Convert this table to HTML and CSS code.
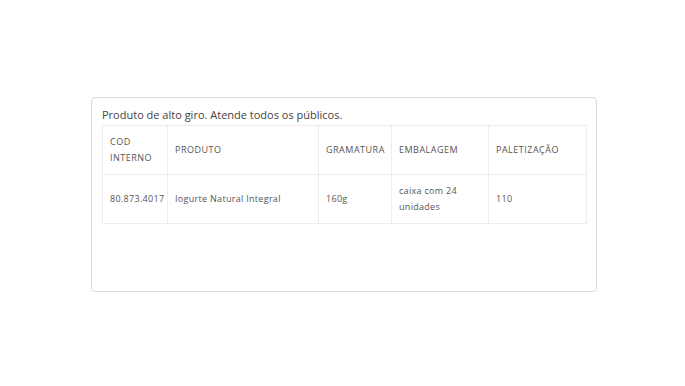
FILE: index.html
```html
<!DOCTYPE html>
<html lang="pt">
<head>
<meta charset="utf-8">
<link rel="stylesheet" href="styles.css">
</head>
<body>
<div class="page">
  <div class="card">
    <p class="desc">Produto de alto giro. Atende todos os públicos.</p>
    <table class="spec">
      <colgroup>
        <col class="c1"><col class="c2"><col class="c3"><col class="c4"><col class="c5">
      </colgroup>
      <thead>
        <tr><th>COD<br>INTERNO</th><th>PRODUTO</th><th>GRAMATURA</th><th>EMBALAGEM</th><th>PALETIZAÇÃO</th></tr>
      </thead>
      <tbody>
        <tr><td>80.873.4017</td><td>Iogurte Natural Integral</td><td>160g</td><td>caixa com 24<br>unidades</td><td>110</td></tr>
      </tbody>
    </table>
  </div>
</div>
</body>
</html>
```
FILE: styles.css
```css
html, body {
  margin: 0;
  padding: 0;
  background: #fff;
}
.page {
  padding: 97px 0 0 91px;
}
.card {
  box-sizing: border-box;
  width: 506px;
  height: 195px;
  border: 1px solid #d9d9d9;
  border-radius: 4px;
  padding: 9px 10px 0 10px;
  font-family: "Open Sans", sans-serif;
}
.desc {
  margin: 0 0 3px 0;
  font-size: 11px;
  line-height: 15px;
  color: #444;
}
.spec {
  width: 484px;
  border-collapse: collapse;
  table-layout: fixed;
  font-size: 9px;
  color: #555;
}
.c1 { width: 65px; }
.c2 { width: 151px; }
.c3 { width: 73px; }
.c4 { width: 97px; }
.c5 { width: 98px; }
.spec th, .spec td {
  border: 1px solid #ececec;
  height: 48px;
  padding: 0 6px 0 7px;
  text-align: left;
  vertical-align: middle;
  font-weight: normal;
  line-height: 16px;
}
.spec th {
  letter-spacing: 0.5px;
}
.spec td {
  letter-spacing: 0.3px;
}
```
